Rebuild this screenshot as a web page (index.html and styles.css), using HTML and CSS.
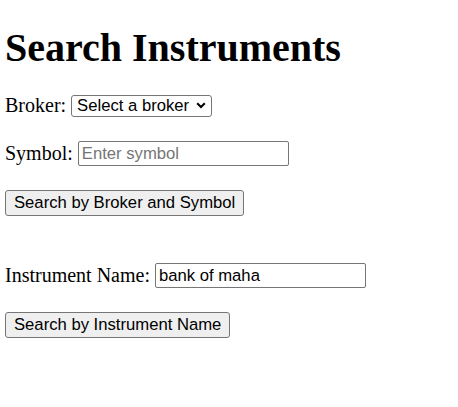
FILE: index.html
```html
<!DOCTYPE html>
<html>
<head>
<meta charset="utf-8">
<link rel="stylesheet" href="styles.css">
</head>
<body>
<h1 class="title">Search Instruments</h1>
<form class="search-form">
  <div class="row"><label class="lbl" for="broker">Broker:</label><select id="broker" class="ctl sel"><option>Select a broker</option></select></div>
  <div class="row"><label class="lbl" for="symbol">Symbol:</label><input id="symbol" class="ctl text" placeholder="Enter symbol"></div>
  <div class="row"><button type="button" class="btn">Search by Broker and Symbol</button></div>
</form>
<form class="search-form second">
  <div class="row"><label class="lbl" for="name">Instrument Name:</label><input id="name" class="ctl text" value="bank of maha"></div>
  <div class="row"><button type="button" class="btn">Search by Instrument Name</button></div>
</form>
</body>
</html>
```
FILE: styles.css
```css
body {
  margin: 0 5px;
  padding-top: 1px;
  font-family: "Liberation Serif", serif;
  font-size: 20px;
  color: #000;
  background: #fff;
}
.title {
  font-size: 40px;
  line-height: 46px;
  font-weight: bold;
  margin: 24px 0 23px;
}
.search-form {
  margin: 0;
}
.row {
  display: flex;
  align-items: center;
  gap: 5px;
  margin: 0 0 24px;
  line-height: 23px;
}
.second {
  margin-top: 47px;
}
.ctl, .btn {
  font-family: "Liberation Sans", Arial, sans-serif;
  font-size: 16.67px;
  color: #000;
  box-sizing: border-box;
  margin: 0;
}
.sel {
  -webkit-appearance: none;
  appearance: none;
  height: 22px;
  width: 141px;
  padding: 0 0 0 5px;
  border: 1px solid #767676;
  border-radius: 3px;
  background: #fff url("data:image/svg+xml,%3Csvg xmlns='http://www.w3.org/2000/svg' width='10' height='7' viewBox='0 0 10 7'%3E%3Cpath d='M1.2 1.2 L5 5 L8.8 1.2' fill='none' stroke='%23000' stroke-width='2'/%3E%3C/svg%3E") no-repeat right 5px center;
  line-height: 20px;
}
.text {
  width: 211px;
  height: 25px;
  padding: 1px 3px;
  border: 1px solid #767676;
  border-radius: 2px;
  background: #fff;
}
.text::placeholder {
  color: #757575;
}
.btn {
  height: 26px;
  padding: 0 8px;
  border: 1px solid #767676;
  border-radius: 3px;
  background: #efefef;
  line-height: 20px;
}
```
